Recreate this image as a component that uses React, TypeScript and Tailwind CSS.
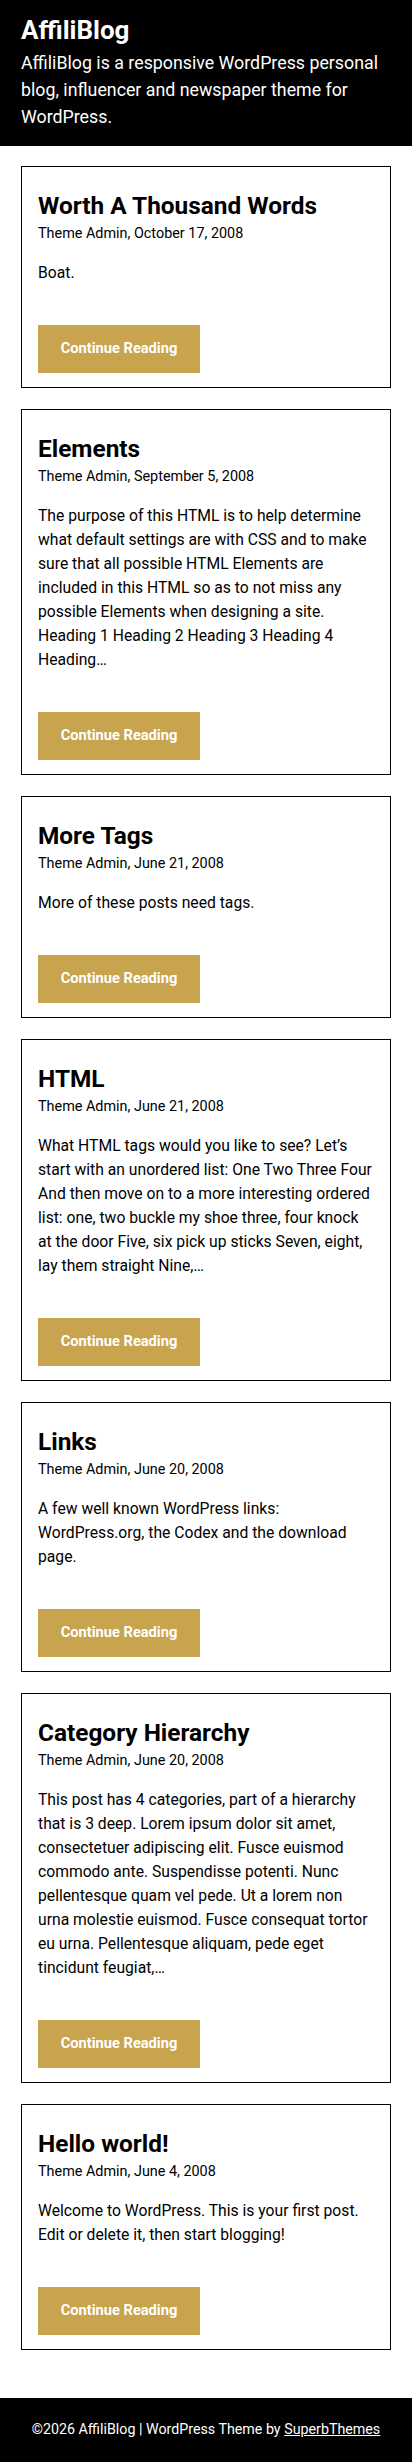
const posts = [
  {
    title: 'Worth A Thousand Words',
    meta: 'Theme Admin, October 17, 2008',
    excerpt: 'Boat.',
  },
  {
    title: 'Elements',
    meta: 'Theme Admin, September 5, 2008',
    excerpt:
      'The purpose of this HTML is to help determine what default settings are with CSS and to make sure that all possible HTML Elements are included in this HTML so as to not miss any possible Elements when designing a site. Heading 1 Heading 2 Heading 3 Heading 4 Heading…',
  },
  {
    title: 'More Tags',
    meta: 'Theme Admin, June 21, 2008',
    excerpt: 'More of these posts need tags.',
  },
  {
    title: 'HTML',
    meta: 'Theme Admin, June 21, 2008',
    excerpt:
      'What HTML tags would you like to see? Let’s start with an unordered list: One Two Three Four And then move on to a more interesting ordered list: one, two buckle my shoe three, four knock at the door Five, six pick up sticks Seven, eight, lay them straight Nine,…',
  },
  {
    title: 'Links',
    meta: 'Theme Admin, June 20, 2008',
    excerpt: 'A few well known WordPress links: WordPress.org, the Codex and the download page.',
  },
  {
    title: 'Category Hierarchy',
    meta: 'Theme Admin, June 20, 2008',
    excerpt:
      'This post has 4 categories, part of a hierarchy that is 3 deep. Lorem ipsum dolor sit amet, consectetuer adipiscing elit. Fusce euismod commodo ante. Suspendisse potenti. Nunc pellentesque quam vel pede. Ut a lorem non urna molestie euismod. Fusce consequat tortor eu urna. Pellentesque aliquam, pede eget tincidunt feugiat,…',
  },
  {
    title: 'Hello world!',
    meta: 'Theme Admin, June 4, 2008',
    excerpt: 'Welcome to WordPress. This is your first post. Edit or delete it, then start blogging!',
  },
];

function PostCard({ title, meta, excerpt }: { title: string; meta: string; excerpt: string }) {
  return (
    <article className="border border-black bg-white px-4 pt-6 pb-[14px]">
      <h2 className="text-[24.4px] leading-[30px] font-bold text-black">{title}</h2>
      <div className="text-[14.4px] leading-[26px] text-black">{meta}</div>
      <p className="mt-[14px] text-[15.7px] leading-6 text-black">{excerpt}</p>
      <a
        href="#"
        className="mt-10 flex h-12 w-[162px] items-center justify-center bg-[#c9a44e] text-[14.65px] font-bold text-white"
      >
        Continue Reading
      </a>
    </article>
  );
}

export default function App() {
  return (
    <div className="bg-white font-['Roboto','Liberation_Sans',sans-serif] text-black">
      <header className="bg-black px-[21px] pt-4 pb-4 text-white">
        <h1 className="text-[26px] leading-[29px] font-bold">AffiliBlog</h1>
        <p className="mt-1 text-[17.8px] leading-[27px]">
          AffiliBlog is a responsive WordPress personal blog, influencer and newspaper theme for WordPress.
        </p>
      </header>

      <main className="flex flex-col gap-[21px] px-[21px] pt-5 pb-12">
        {posts.map((p) => (
          <PostCard key={p.title} {...p} />
        ))}
      </main>

      <footer className="flex h-16 items-center justify-center bg-black text-[14.25px] text-white">
        <span>
          ©2026 AffiliBlog | WordPress Theme by{' '}
          <a href="#" className="underline">
            SuperbThemes
          </a>
        </span>
      </footer>
    </div>
  );
}
